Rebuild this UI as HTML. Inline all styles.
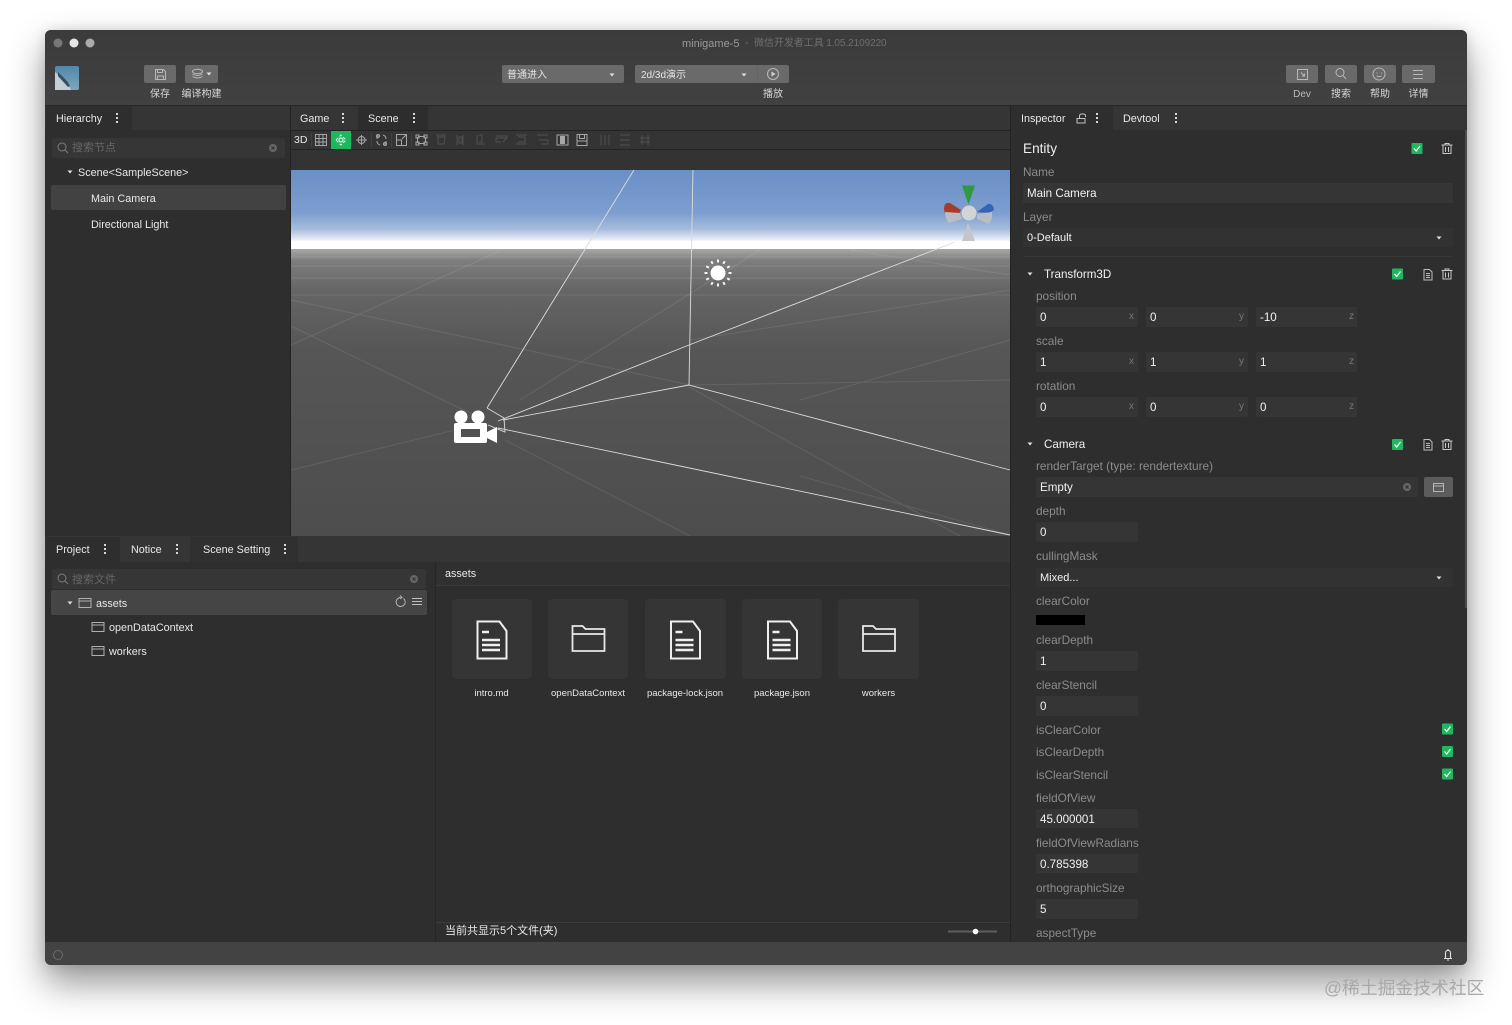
<!DOCTYPE html>
<html><head><meta charset="utf-8"><title>minigame-5</title>
<style>
html,body{margin:0;padding:0;background:#fff;width:1512px;height:1025px;overflow:hidden}
body{position:relative;font-family:"Liberation Sans","Noto Sans CJK SC",sans-serif}
div{position:absolute;box-sizing:border-box}
#w{left:45px;top:30px;width:1422px;height:935px;border-radius:6px;background:#2e2e2e;box-shadow:0 18px 36px rgba(0,0,0,.42),0 0 12px rgba(0,0,0,.12)}
.t{white-space:nowrap;font-size:10.800px;line-height:14px;height:14px;color:#e8e8e8;margin-top:1px}
.c{text-align:center;transform:translateX(-50%)}
.l{color:#8c8c8c;font-size:11.800px;margin-top:0}
.v{color:#f2f2f2;font-size:11.600px;margin-top:1px}
.b{background:#6a6a6a;border-radius:2px}
.i{background:#353535;border-radius:1px}
svg{position:absolute;left:0;top:0}
</style></head><body>
<div id="w"></div>
<!-- top -->
<div style="left:45px;top:30px;width:1422px;height:75px;background:linear-gradient(#3b3b3b,#414141);border-radius:6px 6px 0 0"></div>
<div style="left:45px;top:105px;width:1422px;height:1px;background:#262626"></div>
<!-- logo -->
<div style="left:55px;top:66px;width:24px;height:24px;border-radius:2px;background:linear-gradient(#5288aa,#7ea6bd)"></div>
<!-- buttons -->
<div class="b" style="left:144px;top:65px;width:32px;height:18px"></div>
<div class="b" style="left:185px;top:65px;width:33px;height:18px"></div>
<div class="b" style="left:502px;top:65px;width:122px;height:18px"></div>
<div class="b" style="left:635px;top:65px;width:154px;height:18px"></div>
<div class="b" style="left:1286px;top:65px;width:32px;height:18px"></div>
<div class="b" style="left:1325px;top:65px;width:32px;height:18px"></div>
<div class="b" style="left:1364px;top:65px;width:32px;height:18px"></div>
<div class="b" style="left:1402px;top:65px;width:33px;height:18px"></div>
<!-- tab strips -->
<div style="left:45px;top:106px;width:1422px;height:24px;background:#353535"></div>
<div style="left:46px;top:106px;width:86px;height:24px;background:#2e2e2e"></div>
<div style="left:358px;top:106px;width:70px;height:24px;background:#2d2d2d"></div>
<div style="left:1011px;top:106px;width:102px;height:24px;background:#2e2e2e"></div>
<div style="left:45px;top:130px;width:245px;height:406px;background:#2e2e2e"></div>
<div style="left:290px;top:106px;width:1px;height:430px;background:#232323"></div>
<div style="left:1010px;top:106px;width:1px;height:836px;background:#232323"></div>
<!-- hierarchy -->
<div style="left:52px;top:138px;width:233px;height:20px;background:#363636;border-radius:2px"></div>
<div style="left:51px;top:185px;width:235px;height:25px;background:#424242;border-radius:2px"></div>
<!-- scene toolbar -->
<div style="left:291px;top:130px;width:719px;height:1px;background:#232323"></div>
<div style="left:291px;top:131px;width:719px;height:18px;background:#343434"></div>
<div style="left:291px;top:149px;width:719px;height:1px;background:#242424"></div>
<div style="left:291px;top:150px;width:719px;height:20px;background:#333"></div>
<div style="left:331px;top:131px;width:20px;height:18px;background:#1db75e"></div>
<!-- bottom panels -->
<div style="left:45px;top:536px;width:965px;height:26px;background:#353535"></div>
<div style="left:46px;top:537px;width:74px;height:25px;background:#2e2e2e"></div>
<div style="left:190px;top:537px;width:108px;height:25px;background:#303030"></div>
<div style="left:435px;top:562px;width:1px;height:380px;background:#262626"></div>
<div style="left:52px;top:569px;width:374px;height:20px;background:#363636;border-radius:2px"></div>
<div style="left:51px;top:590px;width:376px;height:25px;background:#454545;border-radius:2px"></div>
<div style="left:436px;top:585px;width:574px;height:1px;background:#3a3a3a"></div>
<div style="left:436px;top:562px;width:574px;height:23px;background:#303030"></div>
<div style="left:436px;top:922px;width:574px;height:1px;background:#3c3c3c"></div>
<div style="left:452px;top:599px;width:80px;height:80px;background:#353535;border-radius:4px"></div>
<div style="left:548px;top:599px;width:80px;height:80px;background:#353535;border-radius:4px"></div>
<div style="left:645px;top:599px;width:81px;height:80px;background:#353535;border-radius:4px"></div>
<div style="left:742px;top:599px;width:80px;height:80px;background:#353535;border-radius:4px"></div>
<div style="left:838px;top:599px;width:81px;height:80px;background:#353535;border-radius:4px"></div>
<!-- status -->
<div style="left:45px;top:942px;width:1422px;height:23px;background:#434343;border-radius:0 0 6px 6px"></div>
<!-- inspector inputs -->
<div style="left:1465px;top:130px;width:2px;height:478px;background:#4c4c4c"></div>
<div class="i" style="left:1023px;top:183px;width:430px;height:20px"></div>
<div class="i" style="left:1023px;top:228px;width:430px;height:19px;background:#323232"></div>
<div style="left:1023px;top:256px;width:430px;height:1px;background:#363636"></div>
<div class="i" style="left:1036px;top:307px;width:102px;height:20px"></div>
<div class="i" style="left:1146px;top:307px;width:102px;height:20px"></div>
<div class="i" style="left:1256px;top:307px;width:101px;height:20px"></div>
<div class="i" style="left:1036px;top:352px;width:102px;height:20px"></div>
<div class="i" style="left:1146px;top:352px;width:102px;height:20px"></div>
<div class="i" style="left:1256px;top:352px;width:101px;height:20px"></div>
<div class="i" style="left:1036px;top:397px;width:102px;height:20px"></div>
<div class="i" style="left:1146px;top:397px;width:102px;height:20px"></div>
<div class="i" style="left:1256px;top:397px;width:101px;height:20px"></div>
<div class="i" style="left:1036px;top:477px;width:382px;height:20px"></div>
<div class="b" style="left:1424px;top:477px;width:29px;height:20px;background:#5c5c5c"></div>
<div class="i" style="left:1036px;top:522px;width:102px;height:20px"></div>
<div class="i" style="left:1036px;top:568px;width:417px;height:19px;background:#323232"></div>
<div style="left:1036px;top:615px;width:49px;height:10px;background:#000"></div>
<div class="i" style="left:1036px;top:651px;width:102px;height:20px"></div>
<div class="i" style="left:1036px;top:696px;width:102px;height:20px"></div>
<div class="i" style="left:1036px;top:809px;width:102px;height:19px"></div>
<div class="i" style="left:1036px;top:854px;width:102px;height:19px"></div>
<div class="i" style="left:1036px;top:899px;width:102px;height:20px"></div>

<svg width="1512" height="1025" viewBox="0 0 1512 1025" fill="none" xmlns="http://www.w3.org/2000/svg">
<defs>
<linearGradient id="sky" x1="0" y1="170" x2="0" y2="242" gradientUnits="userSpaceOnUse"><stop offset="0" stop-color="#6a8fc6"/><stop offset=".6" stop-color="#7d9ecf"/><stop offset=".82" stop-color="#a6bcdc"/><stop offset=".95" stop-color="#dfe7f2"/><stop offset="1" stop-color="#fff"/></linearGradient>
<linearGradient id="gr" x1="0" y1="249" x2="0" y2="536" gradientUnits="userSpaceOnUse"><stop offset="0" stop-color="#a8a8a8"/><stop offset=".04" stop-color="#7e7e7e"/><stop offset=".14" stop-color="#666"/><stop offset=".35" stop-color="#565656"/><stop offset="1" stop-color="#4d4d4d"/></linearGradient>
<g id="kb" fill="#d8d8d8"><rect x="-1" y="-5" width="2" height="2"/><rect x="-1" y="-1" width="2" height="2"/><rect x="-1" y="3" width="2" height="2"/></g>
<g id="chk"><rect x="-5.500" y="-5.500" width="11" height="11" rx="1" fill="#1fb85f"/><path d="M-3 0l2.200 2.500L3 -2.500" stroke="#fff" stroke-width="1.200"/></g>
<g id="tr" stroke="#c8c8c8" stroke-width="1"><path d="M-5.500 -3.500h11M-2-3.500v-1.500h4v1.500M-4 -3.500v8.500h8v-8.500M-1.500 -1.500v5M1.500 -1.500v5"/></g>
<g id="dc" stroke="#bcbcbc" stroke-width="1"><path d="M-4 -5h5.500l2.500 2.500v8h-8zM-2 -1h4M-2 1h4M-2 3h4"/></g>
<path id="ar" d="M-2.500 -1.500h5l-2.500 3z" fill="#e0e0e0"/>
<g id="doc" stroke="#efefef" stroke-width="2"><path d="M-14.500 -18.500h22l7 9.500v27.500h-29z"/><path d="M-10-8h7M-10 0h18M-10 5h18M-10 10h18" stroke-width="2.400"/></g>
<g id="fd" stroke="#e8e8e8" stroke-width="1.800"><path d="M-16 -13h10l3 3h19v22h-32zM-16 -5h32"/></g>
<g id="sf" stroke="#b0b0b0" stroke-width="1"><path d="M-6 -4.500h12v9h-12zM-6 -2h12"/></g>
</defs>
<!-- scene -->
<rect x="291" y="170" width="719" height="72" fill="url(#sky)"/>
<rect x="291" y="241" width="719" height="8" fill="#fff"/>
<rect x="291" y="249" width="719" height="287" fill="url(#gr)"/>
<g stroke="#fff" stroke-width="1" stroke-opacity=".09">
<path d="M291 257H1010M291 266H1010M291 278H1010M291 295H1010"/>
<path d="M291 326L480 418M291 470L455 430M505 440L690 536M291 300L690 385M500 251L291 345M690 340L1010 290M800 400L1010 340M689 385L1010 380M760 250L520 400M850 250L1010 275"/>
<path d="M1010 535L800 476M960 536L689 387"/>
</g>
<g stroke="#dcdcdc" stroke-width=".9">
<path d="M487 408L634 170M693 170L689 385L1010 470M689 385L503 420M498 421L689 345L955 242M498 428L1010 535M487 408L504 418L505 432L488 425"/>
</g>
<g fill="#fff"><circle cx="461" cy="417" r="6.500"/><circle cx="478" cy="417" r="6.500"/><path fill-rule="evenodd" d="M456 423h29a2 2 0 0 1 2 2v16a2 2 0 0 1-2 2h-29a2 2 0 0 1-2-2v-16a2 2 0 0 1 2-2zM461 429v8h19v-8z"/><path d="M487 432l10-5v16l-10-5z"/></g>
<circle cx="718" cy="273" r="7.500" fill="#fff"/>
<g transform="translate(718 273)" stroke="#f4f4f4" stroke-width="2"><path d="M10.500 0H13.500M-10.500 0H-13.500M0 10.500V13.500M0 -10.500V-13.500M9.100 5.250L11.700 6.750M-9.100 5.250L-11.700 6.750M9.100 -5.250L11.700 -6.750M-9.100 -5.250L-11.700 -6.750M5.250 9.100L6.750 11.700M-5.250 9.100L-6.750 11.700M5.250 -9.100L6.750 -11.700M-5.250 -9.100L-6.750 -11.700"/></g>
<path d="M962 185.500h13l-6.500 19z" fill="#2f9a3f"/>
<path d="M944 209q0-7 6-6l11 7-2 4h-14z" fill="#a83c2a"/>
<path d="M977 212l11-8q5-1 6 6l-5 3z" fill="#3464b4"/>
<path d="M945 212l15 1 2 6-13 4q-4-4-4-11z" fill="#b9bdc5"/>
<path d="M977 214l15-2q1 7-3 12l-12-5z" fill="#b7bcc5"/>
<circle cx="969" cy="213" r="7.500" fill="#d2d4d8"/>
<path d="M968 223l-6 18h13z" fill="#c3c5c9"/>
<!-- logo detail -->
<path d="M55 72l12 10 4 8H55z" fill="#c3ced3"/><path d="M58 72l9 9 3 5-2 1-10-11z" fill="#2f5069"/>
<!-- traffic -->
<circle cx="58" cy="43" r="4.500" fill="#777"/><circle cx="74" cy="43" r="4.500" fill="#e6e6e6"/><circle cx="90" cy="43" r="4.500" fill="#ababab"/>
<!-- toolbar icons -->
<g stroke="#b8b8b8" stroke-width="1">
<path d="M155.500 69.500h8l2 2v8h-10zM157.500 69.500v3h5v-3M157.500 79.500v-3.500h6v3.500"/>
<ellipse cx="197.500" cy="71.500" rx="5" ry="2.200"/><path d="M192.500 74q5 3 10 0M192.500 76.500q5 3 10 0"/>
<path d="M1297.500 69.500h10v10h-10zM1301 72.500l3.500 3.500M1304.500 73.500v2.500h-2.500"/>
<circle cx="1340" cy="72.500" r="4"/><path d="M1343 75.500l3 3.500"/>
<circle cx="1379" cy="74" r="6"/><path d="M1376.500 73h1M1381 73h1M1376.500 76q2.500 1.500 5 0"/>
<path d="M1413 70.500h10M1413 74.500h10M1413 78.500h10"/>
<circle cx="773" cy="74" r="5.500"/>
</g>
<path d="M771.500 71.500l4 2.500-4 2.500z" fill="#d0d0d0"/>
<use href="#ar" x="209" y="74"/><use href="#ar" x="612" y="75"/><use href="#ar" x="744" y="75"/>
<path d="M757.500 66v16" stroke="#646464"/>
<!-- kebabs -->
<use href="#kb" x="117" y="118"/><use href="#kb" x="343" y="118"/><use href="#kb" x="414" y="118"/><use href="#kb" x="1097" y="118"/><use href="#kb" x="1176" y="118"/><use href="#kb" x="105" y="549"/><use href="#kb" x="177" y="549"/><use href="#kb" x="285" y="549"/>
<!-- lock -->
<path d="M1077 118.500h8v4.500h-8zM1079.500 118.500v-2.500q0-2 2.500-2h1.500q2 0 2 2v1" stroke="#c4c4c4" stroke-width="1"/>
<!-- search -->
<g stroke="#7c7c7c" stroke-width="1"><circle cx="62" cy="147" r="4"/><path d="M65 150l3 3"/><circle cx="62" cy="578" r="4"/><path d="M65 581l3 3"/></g>
<circle cx="273" cy="148" r="4" fill="#666"/><circle cx="414" cy="579" r="4" fill="#666"/><circle cx="1407" cy="487" r="4" fill="#666"/>
<path d="M271.500 146.500l3 3M274.500 146.500l-3 3M412.500 577.500l3 3M415.500 577.500l-3 3M1405.500 485.500l3 3M1408.500 485.500l-3 3" stroke="#333"/>
<use href="#ar" x="70" y="172"/><use href="#ar" x="70" y="603"/><use href="#ar" x="1030" y="274"/><use href="#ar" x="1030" y="444"/><use href="#ar" x="1439" y="238"/><use href="#ar" x="1439" y="578"/>
<!-- scene tools -->
<g stroke="#a6a6a6" stroke-width="1">
<path d="M315.500 134.500h11v11h-11zM319 134.500v11M323 134.500v11M315.500 138.500h11M315.500 142h11"/>
<circle cx="361.500" cy="140" r="3.500"/><path d="M361.500 135v10M356 140h11"/>
<path d="M377 139v-3h3M386 141v3h-3M383 135q3 1 3 4M377 141q0 3 3 4"/><circle cx="378" cy="136" r="1.500"/><circle cx="385" cy="144" r="1.500"/>
<path d="M396.500 134.500h10v11h-10zM396.500 140h5v5.500M402 139l4-4"/>
<path d="M418 136.500h7M418 143.500h7M417.500 137v6M425.500 137v6M416 135h3v3h-3zM424 135h3v3h-3zM416 142h3v3h-3zM424 142h3v3h-3z"/>
<path d="M557 135h11v10h-11z"/><rect x="560" y="136" width="5" height="8" fill="#a6a6a6" stroke="none"/>
<path d="M577 134.500h10v11h-10zM577 141h10M579.500 134.500v4h5v-4"/>
</g>
<circle cx="341" cy="140" r="2" stroke="#fff"/><path d="M336 140l5-5 5 5-5 5z" stroke="#fff" stroke-dasharray="3 2"/>
<g stroke="#505050" stroke-width="1">
<path d="M437 135h8v2h-7zM438 137v7h6l1-7M457 135v10M463 135v10M459 137h3v6h-3z"/>
<path d="M477 135v9h8M479 135h3v7h-3M496 136h11v2h-11v4h5M507 138l-4 4M516 135h11M516 144h11M518 137h7v5h-7M537 135h11M539 140h9v4h-7M601 135v10M605 135v10M609 135v10M620 135h10M620 145h10M620 140h10M642 135v10M648 135v10M640 138h10M640 142h10"/>
</g>
<g stroke="#424242"><path d="M311.500 133v14M351.500 133v14M371.500 133v14M391.500 133v14M411.500 133v14"/></g>
<!-- project icons -->
<use href="#sf" x="85" y="603"/><use href="#sf" x="98" y="627"/><use href="#sf" x="98" y="651"/>
<path d="M403.500 598.500a4.500 4.500 0 1 1-3-1M400 595.500l2 2-2 1.500" stroke="#b4b4b4"/>
<path d="M412 598.500h10M412 601.500h10M412 604.500h10" stroke="#c0c0c0"/>
<!-- files -->
<use href="#doc" x="492" y="640"/><use href="#doc" x="685.500" y="640"/><use href="#doc" x="782.500" y="640"/>
<use href="#fd" x="588.500" y="639"/><use href="#fd" x="879" y="639"/>
<!-- slider -->
<path d="M948 931.500h49" stroke="#5e5e5e" stroke-width="2"/><circle cx="975.500" cy="931.500" r="2.800" fill="#fff"/>
<!-- inspector icons -->
<use href="#chk" x="1417" y="148.500"/><use href="#tr" x="1447" y="148.500"/>
<use href="#chk" x="1397.500" y="274"/><use href="#dc" x="1428" y="274.500"/><use href="#tr" x="1447" y="274"/>
<use href="#chk" x="1397.500" y="444.500"/><use href="#dc" x="1428" y="444.500"/><use href="#tr" x="1447" y="444.500"/>
<use href="#chk" x="1447.500" y="729"/><use href="#chk" x="1447.500" y="751.500"/><use href="#chk" x="1447.500" y="774"/>
<path d="M1433.500 483.500h10v8h-10zM1433.500 486h10" stroke="#b4b4b4"/>
<!-- status -->
<circle cx="58" cy="955" r="4.500" stroke="#6a6a6a"/>
<path d="M1444 958.500h8M1445.500 958v-5q0-2.500 2.500-2.500t2.500 2.500v5M1448 949v1.500M1447 960h2" stroke="#e0e0e0" stroke-width="1.100"/>
</svg>

<!-- text -->
<div class="t" style="left:682px;top:36px;color:#999;font-size:11px">minigame-5</div>
<div class="t" style="left:745px;top:36px;color:#6b6b6b;font-size:10px">-</div>
<div class="t" style="left:754px;top:36px;color:#6f6f6f;font-size:10px;letter-spacing:-.07px">微信开发者工具 1.05.2109220</div>
<div class="t c" style="left:160px;top:87px;font-size:10px;color:#d8d8d8">保存</div>
<div class="t c" style="left:201.500px;top:87px;font-size:10px;color:#d8d8d8">编译构建</div>
<div class="t" style="left:507px;top:68px;font-size:10px;color:#e4e4e4">普通进入</div>
<div class="t" style="left:641px;top:68px;font-size:10px;color:#e4e4e4">2d/3d演示</div>
<div class="t c" style="left:773px;top:87px;font-size:10px;color:#d8d8d8">播放</div>
<div class="t c" style="left:1302px;top:87px;font-size:10px;color:#bbb">Dev</div>
<div class="t c" style="left:1341px;top:87px;font-size:10px;color:#d8d8d8">搜索</div>
<div class="t c" style="left:1380px;top:87px;font-size:10px;color:#d8d8d8">帮助</div>
<div class="t c" style="left:1418.500px;top:87px;font-size:10px;color:#d8d8d8">详情</div>

<div class="t" style="left:56px;top:111px">Hierarchy</div>
<div class="t" style="left:300px;top:111px">Game</div>
<div class="t" style="left:368px;top:111px">Scene</div>
<div class="t" style="left:1021px;top:111px">Inspector</div>
<div class="t" style="left:1123px;top:111px">Devtool</div>
<div class="t" style="left:294px;top:132px;font-size:10.500px">3D</div>
<div class="t" style="left:72px;top:140px;color:#666;font-size:11px">搜索节点</div>
<div class="t" style="left:78px;top:165px">Scene&lt;SampleScene&gt;</div>
<div class="t" style="left:91px;top:191px">Main Camera</div>
<div class="t" style="left:91px;top:217px">Directional Light</div>

<div class="t" style="left:56px;top:542px">Project</div>
<div class="t" style="left:131px;top:542px">Notice</div>
<div class="t" style="left:203px;top:542px">Scene Setting</div>
<div class="t" style="left:72px;top:572px;color:#666;font-size:11px">搜索文件</div>
<div class="t" style="left:96px;top:596px">assets</div>
<div class="t" style="left:109px;top:620px">openDataContext</div>
<div class="t" style="left:109px;top:644px">workers</div>
<div class="t" style="left:445px;top:566px">assets</div>
<div class="t c" style="left:491.500px;top:686px;font-size:9.500px">intro.md</div>
<div class="t c" style="left:588px;top:686px;font-size:9.500px">openDataContext</div>
<div class="t c" style="left:685px;top:686px;font-size:9.500px">package-lock.json</div>
<div class="t c" style="left:782px;top:686px;font-size:9.500px">package.json</div>
<div class="t c" style="left:878.500px;top:686px;font-size:9.500px">workers</div>
<div class="t" style="left:445px;top:923px;font-size:11px">当前共显示5个文件(夹)</div>

<div class="t" style="left:1023px;top:141px;font-size:13.600px;color:#eee">Entity</div>
<div class="t l" style="left:1023px;top:165px">Name</div>
<div class="t v" style="left:1027px;top:186px">Main Camera</div>
<div class="t l" style="left:1023px;top:210px">Layer</div>
<div class="t v" style="left:1027px;top:230px;font-size:11px">0-Default</div>
<div class="t v" style="left:1044px;top:267px">Transform3D</div>
<div class="t l" style="left:1036px;top:289px">position</div>
<div class="t v" style="left:1040px;top:310px">0</div><div class="t l" style="left:1129px;top:310px;font-size:10px;color:#777">x</div>
<div class="t v" style="left:1150px;top:310px">0</div><div class="t l" style="left:1239px;top:310px;font-size:10px;color:#777">y</div>
<div class="t v" style="left:1260px;top:310px">-10</div><div class="t l" style="left:1349px;top:310px;font-size:10px;color:#777">z</div>
<div class="t l" style="left:1036px;top:334px">scale</div>
<div class="t v" style="left:1040px;top:355px">1</div><div class="t l" style="left:1129px;top:355px;font-size:10px;color:#777">x</div>
<div class="t v" style="left:1150px;top:355px">1</div><div class="t l" style="left:1239px;top:355px;font-size:10px;color:#777">y</div>
<div class="t v" style="left:1260px;top:355px">1</div><div class="t l" style="left:1349px;top:355px;font-size:10px;color:#777">z</div>
<div class="t l" style="left:1036px;top:379px">rotation</div>
<div class="t v" style="left:1040px;top:400px">0</div><div class="t l" style="left:1129px;top:400px;font-size:10px;color:#777">x</div>
<div class="t v" style="left:1150px;top:400px">0</div><div class="t l" style="left:1239px;top:400px;font-size:10px;color:#777">y</div>
<div class="t v" style="left:1260px;top:400px">0</div><div class="t l" style="left:1349px;top:400px;font-size:10px;color:#777">z</div>
<div class="t v" style="left:1044px;top:437px">Camera</div>
<div class="t l" style="left:1036px;top:459px">renderTarget (type: rendertexture)</div>
<div class="t v" style="left:1040px;top:480px">Empty</div>
<div class="t l" style="left:1036px;top:504px">depth</div>
<div class="t v" style="left:1040px;top:525px">0</div>
<div class="t l" style="left:1036px;top:549px">cullingMask</div>
<div class="t v" style="left:1040px;top:570px;font-size:11px">Mixed...</div>
<div class="t l" style="left:1036px;top:594px">clearColor</div>
<div class="t l" style="left:1036px;top:633px">clearDepth</div>
<div class="t v" style="left:1040px;top:654px">1</div>
<div class="t l" style="left:1036px;top:678px">clearStencil</div>
<div class="t v" style="left:1040px;top:699px">0</div>
<div class="t l" style="left:1036px;top:723px">isClearColor</div>
<div class="t l" style="left:1036px;top:745px">isClearDepth</div>
<div class="t l" style="left:1036px;top:768px">isClearStencil</div>
<div class="t l" style="left:1036px;top:791px">fieldOfView</div>
<div class="t v" style="left:1040px;top:812px">45.000001</div>
<div class="t l" style="left:1036px;top:836px">fieldOfViewRadians</div>
<div class="t v" style="left:1040px;top:857px">0.785398</div>
<div class="t l" style="left:1036px;top:881px">orthographicSize</div>
<div class="t v" style="left:1040px;top:902px">5</div>
<div class="t l" style="left:1036px;top:926px">aspectType</div>

<div class="t" style="left:1324px;top:976px;height:22px;line-height:22px;font-size:17.800px;color:#a9a9a9">@稀土掘金技术社区</div>
</body></html>
